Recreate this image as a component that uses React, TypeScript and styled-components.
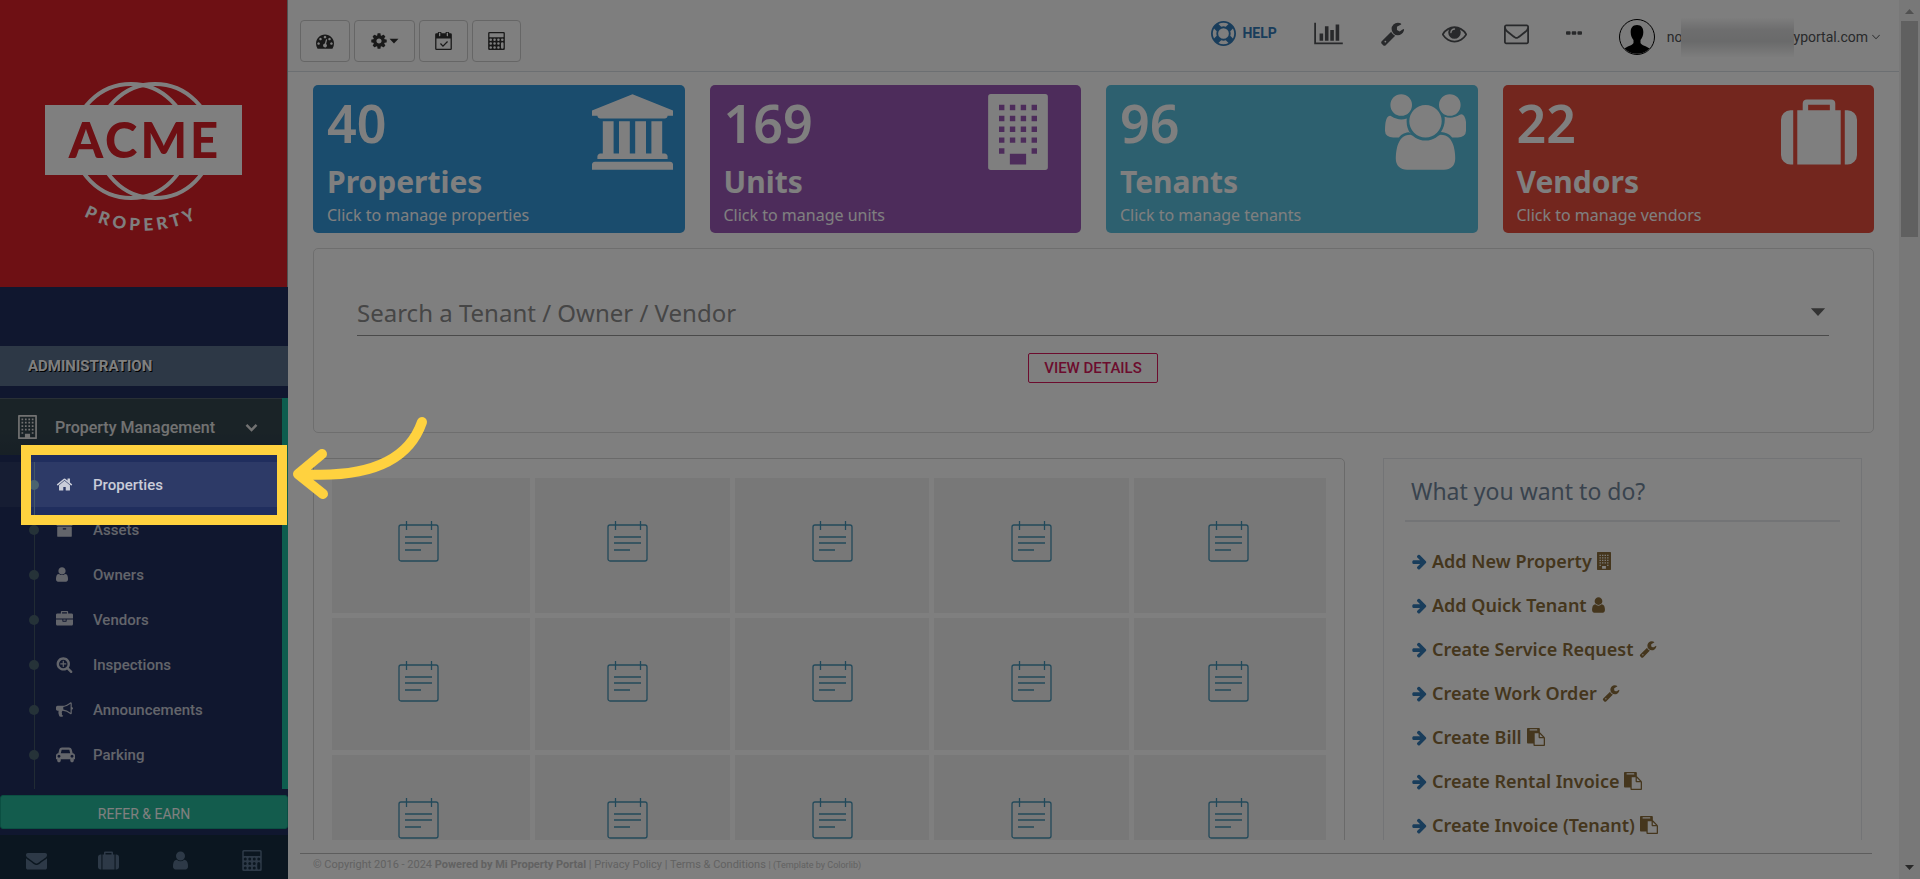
import React from "react";
import styled, { createGlobalStyle, css } from "styled-components";

const humanist = `"Noto Sans", "Open Sans", sans-serif`;
const roboto = `Roboto, "Liberation Sans", sans-serif`;

const GlobalStyle = createGlobalStyle`
  *, *::before, *::after { box-sizing: border-box; }
  body { margin: 0; background: #fff; font-family: ${roboto}; color: #333; }
  a { color: inherit; text-decoration: none; }
  ul { list-style: none; margin: 0; padding: 0; }
  h1, h2, p { margin: 0; }
  button, input { font: inherit; }
`;

/* ---------- icons ---------- */

type Glyph = { x?: number; w: number; d: string };

const dot = (x: number, y: number) =>
  `M${x - 128} ${y}a128 128 0 1 0 256 0a128 128 0 1 0-256 0z`;
const pane = (x: number, y: number) => `M${x} ${y}h128v128h-128z`;
const panes = [256, 512, 768, 1024]
  .flatMap((x) => [256, 512, 768, 1024].map((y) => pane(x, y)))
  .concat(pane(256, 1280), pane(1024, 1280))
  .join("");

const glyphs: Record<string, Glyph> = {
  envelope: { w: 1792, d: "M1792 710v794q0 66-47 113t-113 47h-1472q-66 0-113-47t-47-113v-794q44 49 101 87 362 246 497 345 57 42 92.5 65.5t94.5 48 110 24.5h2q51 0 110-24.5t94.5-48 92.5-65.5q170-123 498-345 57-39 100-87zm0-294q0 79-49 151t-122 123q-376 261-468 325-10 7-42.5 31t-54 38.5-52 32.5-57.5 27-50 9h-2q-23 0-50-9t-57.5-27-52-32.5-54-38.5-42.5-31q-91-64-262-182.5t-205-142.5q-62-42-117-115.5t-55-136.5q0-78 41.5-130t118.5-52h1472q65 0 112.5 47t47.5 113z" },
  home: { w: 1792, d: "M1472 992v480q0 26-19 45t-45 19h-384v-384h-256v384h-384q-26 0-45-19t-19-45v-480q0-1 .5-3t.5-3l575-474 575 474q1 2 1 6zm223-69l-62 74q-8 9-21 11h-3q-13 0-21-7l-692-577-692 577q-12 8-24 7-13-2-21-11l-62-74q-8-10-7-23.5t11-21.5l719-599q32-26 76-26t76 26l244 204v-195q0-14 9-23t23-9h192q14 0 23 9t9 23v408l219 182q10 8 11 21.5t-7 23.5z" },
  user: { x: 256, w: 1280, d: "M1536 1399q0 109-62.5 187t-150.5 78h-854q-88 0-150.5-78t-62.5-187q0-85 8.5-160.5t31.5-152 58.5-131 94-89 134.5-34.5q131 128 313 128t313-128q76 0 134.5 34.5t94 89 58.5 131 31.5 152 8.5 160.5zm-256-887q0 159-112.5 271.5t-271.5 112.5-271.5-112.5-112.5-271.5 112.5-271.5 271.5-112.5 271.5 112.5 112.5 271.5z" },
  wrench: { w: 1792, d: "M448 1472q0-26-19-45t-45-19-45 19-19 45 19 45 45 19 45-19 19-45zm644-420l-682 682q-37 37-90 37-52 0-91-37l-106-108q-38-36-38-90 0-53 38-91l681-681q39 98 114.5 173.5t173.5 114.5zm634-435q0 39-23 106-47 134-164.5 217.5t-258.5 83.5q-185 0-316.5-131.5t-131.5-316.5 131.5-316.5 316.5-131.5q58 0 121.5 16.5t107.5 46.5q16 11 16 28t-16 28l-293 169v224l193 107q5-3 79-48.5t135.5-81 70.5-35.5q15 0 23.5 10t8.5 25z" },
  chart: { w: 2048, d: "M640 896v512h-256v-512h256zm384-512v1024h-256v-1024h256zm1024 1152v128h-2048v-1536h128v1408h1920zm-640-896v768h-256v-768h256zm384-384v1152h-256v-1152h256z" },
  eye: { w: 1792, d: "M1664 960q-152-236-381-353 61 104 61 225 0 185-131.5 316.5t-316.5 131.5-316.5-131.5-131.5-316.5q0-121 61-225-229 117-381 353 133 205 333.5 326.5t434.5 121.5 434.5-121.5 333.5-326.5zm-720-384q0-20-14-34t-34-14q-125 0-214.5 89.5t-89.5 214.5q0 20 14 34t34 14 34-14 14-34q0-86 61-147t147-61q20 0 34-14t14-34zm848 384q0 34-20 69-140 230-376.5 368.5t-499.5 138.5-499.5-139-376.5-368q-20-35-20-69t20-69q140-229 376.5-368t499.5-139 499.5 139 376.5 368q20 35 20 69z" },
  envelopeOutline: { w: 1792, d: "M1664 1504v-768q-32 36-69 66-268 206-426 338-51 43-83 67t-86.5 48.5-102.5 24.5h-2q-48 0-102.5-24.5t-86.5-48.5-83-67q-158-132-426-338-37-30-69-66v768q0 13 9.5 22.5t22.5 9.5h1472q13 0 22.5-9.5t9.5-22.5zm0-1051v-24.5l-.5-13-3-12.5-5.5-9-9-7.5-14-2.500h-1472q-13 0-22.5 9.5t-9.5 22.5q0 168 147 284 193 152 401 317 6 5 35 29.5t46 37.5 44.5 31.5 50.5 27.5 43 9h2q20 0 43-9t50.5-27.5 44.5-31.5 46-37.5 35-29.5q208-165 401-317 54-43 100.5-115.5t46.5-131.5zm128-37v1088q0 66-47 113t-113 47h-1472q-66 0-113-47t-47-113v-1088q0-66 47-113t113-47h1472q66 0 113 47t47 113z" },
  bank: { w: 1920, d: "M960 0l960 384v128h-128q0 26-20.5 45t-48.5 19h-1526q-28 0-48.5-19t-20.5-45h-128v-128zm-704 640h256v768h128v-768h256v768h128v-768h256v768h128v-768h256v768h59q28 0 48.5 19t20.5 45v64h-1664v-64q0-26 20.5-45t48.5-19h59v-768zm1595 960q28 0 48.5 19t20.5 45v128h-1920v-128q0-26 20.5-45t48.5-19h1782z" },
  users: { w: 1920, d: "M593 896q-162 5-265 128h-134q-82 0-138-40.5t-56-118.5q0-353 124-353 6 0 43.5 21t97.5 42.5 119 21.5q67 0 133-23-5 37-5 66 0 159 90 295zm1071 637q0 120-73 189.5t-194 69.5h-874q-121 0-194-69.5t-73-189.5q0-53 3.5-103.5t14-109 26.5-108.5 43-97.5 62-81 85.5-53.5 111.5-20q10 0 43 21.5t73 48 107 48 135 21.5 135-21.5 107-48 73-48 43-21.5q61 0 111.5 20t85.5 53.5 62 81 43 97.5 26.5 108.5 14 109 3.5 103.5zm-1024-1277q0 106-75 181t-181 75-181-75-75-181 75-181 181-75 181 75 75 181zm704 384q0 159-112.5 271.5t-271.5 112.5-271.5-112.5-112.5-271.5 112.5-271.5 271.5-112.5 271.5 112.5 112.5 271.5zm576 225q0 78-56 118.5t-138 40.5h-134q-103-123-265-128 90-136 90-295 0-29-5-66 66 23 133 23 59 0 119-21.5t97.5-42.5 43.5-21q124 0 124 353zm-128-609q0 106-75 181t-181 75-181-75-75-181 75-181 181-75 181 75 75 181z" },
  suitcase: { w: 1792, d: "M640 384h512v-128h-512v128zm-352 0v1280h-64q-92 0-158-66t-66-158v-832q0-92 66-158t158-66h64zm1120 0v1280h-1024v-1280h128v-160q0-40 28-68t68-28h576q40 0 68 28t28 68v160h128zm384 224v832q0 92-66 158t-158 66h-64v-1280h64q92 0 158 66t66 158z" },
  briefcase: { w: 1792, d: "M640 256h512v-128h-512v128zm1152 640v480q0 66-47 113t-113 47h-1472q-66 0-113-47t-47-113v-480h672v160q0 26 19 45t45 19h320q26 0 45-19t19-45v-160h672zm-768 0v128h-256v-128h256zm768-480v384h-1792v-384q0-66 47-113t113-47h352v-160q0-40 28-68t68-28h576q40 0 68 28t28 68v160h352q66 0 113 47t47 113z" },
  arrow: { w: 1664, d: "M1600 960q0 54-37 91l-651 651q-39 37-91 37-51 0-90-37l-75-75q-38-38-38-91t38-91l293-293h-704q-52 0-84.5-37.5t-32.5-90.5v-128q0-53 32.5-90.5t84.5-37.5h704l-293-294q-38-36-38-90t38-90l75-75q38-38 90-38 53 0 91 38l651 651q37 35 37 90z" },
  paste: { w: 1792, d: "M768 1664h896v-640h-416q-40 0-68-28t-28-68v-416h-384v1152zm256-1440v-64q0-13-9.5-22.5t-22.5-9.5h-704q-13 0-22.5 9.5t-9.5 22.5v64q0 13 9.5 22.5t22.5 9.5h704q13 0 22.5-9.5t9.5-22.5zm256 672h299l-299-299v299zm512 128v672q0 40-28 68t-68 28h-960q-40 0-68-28t-28-68v-160h-544q-40 0-68-28t-28-68v-1344q0-40 28-68t68-28h1088q40 0 68 28t28 68v328q21 13 36 28l408 408q28 28 48 76t20 88z" },
  cog: { w: 1792, d: "M1152 896q0-106-75-181t-181-75-181 75-75 181 75 181 181 75 181-75 75-181zm512-109v222q0 12-8 23t-20 13l-185 28q-19 54-39 91 35 50 107 138 10 12 10 25t-9 23q-27 37-99 108t-94 71q-12 0-26-9l-138-108q-44 23-91 38-16 136-29 186-7 28-36 28h-222q-14 0-24.5-8.5t-11.5-21.5l-28-184q-49-16-90-37l-141 107q-10 9-25 9-14 0-25-11-126-114-165-168-7-10-7-23 0-12 8-23 15-21 51-66.5t54-70.5q-27-50-41-99l-183-27q-13-2-21-12.5t-8-23.5v-222q0-12 8-23t19-13l186-28q14-46 39-92-40-57-107-138-10-12-10-24 0-10 9-23 26-36 98.5-107.5t94.5-71.5q13 0 26 10l138 107q44-23 91-38 16-136 29-186 7-28 36-28h222q14 0 24.5 8.5t11.5 21.5l28 184q49 16 90 37l142-107q9-9 24-9 13 0 25 10 129 119 165 170 7 8 7 22 0 12-8 23-15 21-51 66.5t-54 70.5q26 50 41 98l183 28q13 2 21 12.5t8 23.5z" },
  lifeRing: { w: 1792, d: "M896 0q182 0 348 71t286 191 191 286 71 348-71 348-191 286-286 191-348 71-348-71-286-191-191-286-71-348 71-348 191-286 286-191 348-71zm0 128q-190 0-361 90l194 194q82-28 167-28t167 28l194-194q-171-90-361-90zm-678 1129l194-194q-28-82-28-167t28-167l-194-194q-90 171-90 361t90 361zm678 407q190 0 361-90l-194-194q-82 28-167 28t-167-28l-194 194q171 90 361 90zm0-384q159 0 271.5-112.5t112.5-271.5-112.5-271.5-271.5-112.5-271.5 112.5-112.5 271.5 112.5 271.5 271.5 112.5zm484-217l194 194q90-171 90-361t-90-361l-194 194q28 82 28 167t-28 167z" },
  searchPlus: { w: 1792, d: "M1088 800v64q0 13-9.5 22.5t-22.5 9.5h-224v224q0 13-9.5 22.5t-22.5 9.5h-64q-13 0-22.5-9.5t-9.5-22.5v-224h-224q-13 0-22.5-9.5t-9.5-22.5v-64q0-13 9.5-22.5t22.5-9.5h224v-224q0-13 9.5-22.5t22.5-9.5h64q13 0 22.5 9.5t9.5 22.5v224h224q13 0 22.5 9.5t9.5 22.5zm128 32q0-185-131.5-316.5t-316.5-131.5-316.5 131.5-131.5 316.5 131.5 316.5 316.5 131.5 316.5-131.5 131.5-316.5zm512 832q0 53-37.5 90.5t-90.5 37.5q-54 0-90-38l-343-342q-179 124-399 124-143 0-273.5-55.5t-225-150-150-225-55.5-273.5 55.5-273.5 150-225 225-150 273.5-55.5 273.5 55.5 225 150 150 225 55.5 273.5q0 220-124 399l343 343q37 37 37 90z" },
  archive: { w: 1792, d: "M1088 832q0-26-19-45t-45-19h-256q-26 0-45 19t-19 45 19 45 45 19h256q26 0 45-19t19-45zm576-192v960q0 26-19 45t-45 19h-1408q-26 0-45-19t-19-45v-960q0-26 19-45t45-19h1408q26 0 45 19t19 45zm64-448v256q0 26-19 45t-45 19h-1536q-26 0-45-19t-19-45v-256q0-26 19-45t45-19h1536q26 0 45 19t19 45z" },
  bullhorn: { w: 1792, d: "M1664 640q53 0 90.5 37.5t37.5 90.5-37.5 90.5-90.5 37.5v384q0 52-38 90t-90 38q-417-347-812-380-58 19-91 66t-31 100.5 40 92.5q-20 33-23 65.5t6 58 33.5 55 48 50 61.5 50.5q-29 58-111.5 83t-168.5 11.5-132-55.5q-7-23-29.5-87.5t-32-94.5-23-89-15-101 3.5-98.5 22-110.5h-122q-66 0-113-47t-47-113v-192q0-66 47-113t113-47h480q435 0 896-384 52 0 90 38t38 90v384zm-128 604v-954q-394 302-768 343v270q377 42 768 341z" },
  car: { w: 2048, d: "M480 1088q0-66-47-113t-113-47-113 47-47 113 47 113 113 47 113-47 47-113zm36-320h1016l-89-357q-2-8-14-17.5t-21-9.5h-768q-9 0-21 9.5t-14 17.5zm1372 320q0-66-47-113t-113-47-113 47-47 113 47 113 113 47 113-47 47-113zm160-96v384q0 14-9 23t-23 9h-96v128q0 80-56 136t-136 56-136-56-56-136v-128h-1024v128q0 80-56 136t-136 56-136-56-56-136v-128h-96q-14 0-23-9t-9-23v-384q0-93 65.5-158.5t158.5-65.5h28l105-419q23-94 104-157.5t179-63.5h768q98 0 179 63.5t104 157.5l105 419h28q93 0 158.5 65.5t65.5 158.5z" },
  gauge: { w: 1792, d: "M384 1152q0-53-37.5-90.5t-90.5-37.5-90.5 37.5-37.5 90.5 37.5 90.5 90.5 37.5 90.5-37.5 37.5-90.5zm192-448q0-53-37.5-90.5t-90.5-37.5-90.5 37.5-37.5 90.5 37.5 90.5 90.5 37.5 90.5-37.5 37.5-90.5zm428 481l101-382q6-26-7.5-48.5t-38.5-29.5-48 6.5-30 39.5l-101 382q-60 5-107 43.5t-63 98.5q-20 77 20 146t117 89 146-20 89-117q16-60-6-117t-72-91zm660-33q0-53-37.5-90.5t-90.5-37.5-90.5 37.5-37.5 90.5 37.5 90.5 90.5 37.5 90.5-37.5 37.5-90.5zm-640-640q0-53-37.5-90.5t-90.5-37.5-90.5 37.5-37.5 90.5 37.5 90.5 90.5 37.5 90.5-37.5 37.5-90.5zm448 192q0-53-37.5-90.5t-90.5-37.5-90.5 37.5-37.5 90.5 37.5 90.5 90.5 37.5 90.5-37.5 37.5-90.5zm320 448q0 261-141 483-19 29-54 29h-1402q-35 0-54-29-141-221-141-483 0-182 71-348t191-286 286-191 348-71 348 71 286 191 191 286 71 348z" },
  building: { w: 1408, d: `M64 0h1280q64 0 64 64v1664q0 64-64 64h-1280q-64 0-64-64v-1664q0-64 64-64z${panes}M512 1408h384v256h-384z` },
  buildingOutline: { w: 1408, d: `M64 0h1280q64 0 64 64v1664q0 64-64 64h-1280q-64 0-64-64v-1664q0-64 64-64zM128 128v1536h384v-256h384v256h384v-1536z${panes}` },
  calculator: { w: 1664, d: `M128 0h1408q128 0 128 128v1536q0 128-128 128h-1408q-128 0-128-128v-1536q0-128 128-128zM128 160v320q0 32 32 32h1344q32 0 32-32v-320q0-32-32-32h-1344q-32 0-32 32z${[256, 640, 1024].flatMap((x) => [768, 1152, 1536].map((y) => dot(x, y))).join("")}${dot(1408, 768)}M1280 1152v384q0 128 128 128t128-128v-384q0-128-128-128t-128 128z` },
  calendarCheck: { w: 1664, d: "M128 1664h1408v-1024h-1408zM384 96v288q0 32 32 32h64q32 0 32-32v-288q0-32-32-32h-64q-32 0-32 32zM1152 96v288q0 32 32 32h64q32 0 32-32v-288q0-32-32-32h-64q-32 0-32 32zM128 128h128v-32q0-96 96-96h192q96 0 96 96v32h384v-32q0-96 96-96h192q96 0 96 96v32h128q128 0 128 128v1408q0 128-128 128h-1408q-128 0-128-128v-1408q0-128 128-128zM1190 900l-410 410-206-206-90 90 296 296 500-500z" },
  chevron: { w: 1792, d: "M896 1480l-810-810 240-240 570 570 570-570 240 240z" },
  angle: { w: 1792, d: "M896 1300l-700-700 100-100 600 600 600-600 100 100z" },
  caret: { w: 1792, d: "M96 480h1600l-800 850z" },
  ellipsis: { w: 1792, d: "M96 704h320q96 0 96 96v192q0 96-96 96h-320q-96 0-96-96v-192q0-96 96-96zM736 704h320q96 0 96 96v192q0 96-96 96h-320q-96 0-96-96v-192q0-96 96-96zM1376 704h320q96 0 96 96v192q0 96-96 96h-320q-96 0-96-96v-192q0-96 96-96z" },
  circle: { w: 1792, d: "M0 896a896 896 0 1 0 1792 0a896 896 0 1 0-1792 0z" },
};

const Svg = styled.svg`
  display: block;
  flex: none;
  fill: currentColor;
`;

function Icon({ name, size }: { name: string; size: number }) {
  const g = glyphs[name];
  return (
    <Svg viewBox={`${g.x ?? 0} 0 ${g.w} 1792`} height={size} width={Math.round((size * g.w) / 1792)} aria-hidden="true">
      <path fillRule="evenodd" d={g.d} />
    </Svg>
  );
}

/* ---------- shell ---------- */

const Shell = styled.div`
  display: grid;
  grid-template-columns: 288px minmax(0, 1fr) 21px;
  height: 100vh;
  overflow: hidden;
`;

const Sidebar = styled.aside`
  display: flex;
  flex-direction: column;
  min-height: 0;
  background: #202e5e;
  color: #fff;
`;

const LogoBox = styled.div`
  flex: none;
  height: 287px;
  background: #dc2028;
  border-right: 1px solid #a0a0a0;
`;

const SectionTitle = styled.h2`
  flex: none;
  height: 40px;
  margin: 59px 0 12px;
  padding-left: 28px;
  background: #5a708c;
  font-size: 15px;
  line-height: 40px;
  font-weight: 700;
  text-shadow: 1px 1px #000;
`;

const MenuArea = styled.nav`
  flex: 1;
  min-height: 0;
  overflow: hidden;
  border-right: 6px solid #1abb9c;
`;

const MenuHead = styled.button`
  display: flex;
  align-items: center;
  width: 100%;
  height: 57px;
  padding: 0 24px 0 18px;
  border: 0;
  border-top: 1px solid #53606c;
  background: linear-gradient(#35474f, #34464f 60%, #2f404c);
  color: #e4e4e4;
  font-size: 16px;
  font-weight: 500;
  text-align: left;
`;

const MenuLabel = styled.span`
  flex: 1;
  padding-left: 18px;
`;

const SubMenu = styled.ul`
  padding-top: 7px;
`;

const SubLink = styled.a<{ $current?: boolean }>`
  display: grid;
  grid-template-columns: 10px 20px 1fr;
  column-gap: 17px;
  align-items: center;
  height: 45px;
  padding-left: 29px;
  color: rgba(255, 255, 255, 0.75);
  font-size: 15px;
  font-weight: 500;
  background: linear-gradient(#425668, #425668) 34px 0 / 1px 100% no-repeat;
  ${(p) =>
    p.$current &&
    css`
      background-color: rgba(255, 255, 255, 0.06);
    `}
`;

const Bullet = styled.span`
  width: 10px;
  height: 10px;
  border-radius: 50%;
  background: #4b6470;
`;

const ReferButton = styled.button`
  flex: none;
  height: 34px;
  margin: 6px 0;
  padding: 4px 0 0;
  border: 1px solid #169f85;
  border-radius: 3px;
  background: #26b99a;
  color: #fff;
  font-size: 14px;
`;

const QuickBar = styled.div`
  flex: none;
  display: grid;
  grid-template-columns: repeat(4, 1fr);
  height: 44px;
  background: #172d40;
  color: #5a738e;
`;

const QuickLink = styled.a`
  display: flex;
  align-items: center;
  justify-content: center;
  padding-top: 6px;
`;

/* ---------- main column ---------- */

const Main = styled.div`
  display: flex;
  flex-direction: column;
  min-height: 0;
`;

const TopBar = styled.header`
  flex: none;
  display: flex;
  justify-content: space-between;
  height: 72px;
  padding: 0 18px 0 12px;
  border-bottom: 1px solid #d9dee4;
  background: #fcfcfc;
`;

const ToolGroup = styled.div`
  display: flex;
  gap: 4px;
  padding-top: 20px;
`;

const ToolButton = styled.button`
  display: flex;
  align-items: center;
  justify-content: center;
  gap: 1px;
  height: 42px;
  padding: 0 15px;
  border: 1px solid #ccc;
  border-radius: 4px;
  background: #fff;
  color: #333;
`;

const StatusGroup = styled.div`
  display: flex;
  align-items: center;
  height: 66px;
  gap: 37px;
  color: #515356;
`;

const HelpLink = styled.a`
  display: flex;
  align-items: center;
  gap: 6px;
  color: #337ab7;
  font-size: 14px;
  font-weight: 700;
`;

const Profile = styled.button`
  display: flex;
  align-items: center;
  height: 100%;
  padding: 8px 0 0;
  border: 0;
  background: none;
  color: #515356;
  font-size: 14px;
`;

const Avatar = styled.svg`
  display: block;
  margin-right: 12px;
`;

const Redacted = styled.span`
  width: 113px;
  height: 39px;
  margin-left: -2px;
  background: linear-gradient(rgba(250, 250, 250, 0.6), #dcdcdd 30%, #d4d5d6 60%, #fafafa);
`;

const CaretSlot = styled.span`
  margin-left: 3px;
`;

const Scroller = styled.main`
  flex: 1;
  min-height: 0;
  overflow: hidden;
  padding: 13px 25px 0;
`;

const Cards = styled.div`
  display: grid;
  grid-template-columns: repeat(4, 1fr);
  gap: 25px;
`;

const Card = styled.a<{ $bg: string }>`
  display: grid;
  grid-template-columns: 1fr 93px;
  height: 148px;
  padding: 0 0 0 14px;
  border-radius: 5px;
  background: ${(p) => p.$bg};
  color: #fff;
  font-family: ${humanist};
`;

const CardText = styled.div`
  display: flex;
  flex-direction: column;
`;

const CardNumber = styled.span`
  padding-top: 10px;
  font-size: 52px;
  line-height: 56px;
  font-weight: 600;
`;

const CardTitle = styled.span`
  padding-top: 11px;
  font-size: 30px;
  line-height: 40px;
  font-weight: 700;
`;

const CardHint = styled.span`
  font-size: 16px;
  line-height: 26px;
`;

const CardIcon = styled.div`
  padding-top: 9px;
`;

const SearchPanel = styled.section`
  display: flex;
  flex-direction: column;
  align-items: center;
  height: 185px;
  margin-top: 15px;
  padding: 40px 44px 0 43px;
  border: 1px solid #ddd;
  border-radius: 5px;
`;

const SearchRow = styled.label`
  display: flex;
  align-items: center;
  justify-content: space-between;
  width: 100%;
  height: 47px;
  padding-right: 3px;
  border-bottom: 1px solid #949494;
  color: #666;
`;

const SearchInput = styled.input`
  flex: 1;
  min-width: 0;
  padding: 0;
  border: 0;
  outline: 0;
  background: none;
  color: #333;
  font-family: ${humanist};
  font-size: 24px;
  &::placeholder {
    color: #8c8c8c;
    opacity: 1;
  }
`;

const ViewButton = styled.button`
  height: 30px;
  margin-top: 17px;
  padding: 0 15px;
  border: 1px solid #d9185c;
  border-radius: 2px;
  background: #fff;
  color: #d9185c;
  font-size: 15px;
  font-weight: 500;
`;

const Columns = styled.div`
  display: grid;
  grid-template-columns: minmax(0, 1032px) minmax(0, 479px);
  justify-content: space-between;
  align-items: start;
  margin-top: 25px;
  padding-right: 12px;
`;

const BoardPanel = styled.section`
  height: 520px;
  padding: 19px 18px 0;
  border: 1px solid #d5d5d5;
  border-radius: 5px;
`;

const Board = styled.div`
  display: grid;
  grid-template-columns: 198fr 195fr 195fr 195fr 192fr;
  grid-template-rows: 135px 132px 132px;
  gap: 5px;
`;

const Tile = styled.div<{ $inset: number }>`
  padding: 42px 0 0 ${(p) => p.$inset}px;
  background: #f1f1f1;
`;

const TodoPanel = styled.section`
  padding: 0 21px;
  height: 520px;
  border: 1px solid #e6e9ed;
  font-family: ${humanist};
`;

const TodoTitle = styled.h2`
  height: 63px;
  padding-left: 6px;
  border-bottom: 2px solid #e6e9ed;
  color: #73879c;
  font-size: 23px;
  line-height: 64px;
  font-weight: 400;
`;

const TodoList = styled.ul`
  padding: 17px 6px 0;
`;

const TodoLink = styled.a`
  display: flex;
  align-items: center;
  gap: 5px;
  height: 44px;
  color: #8a6d3b;
  font-size: 18px;
  font-weight: 600;
`;

const Blue = styled.span`
  color: #337ab7;
`;

const Footer = styled.footer`
  flex: none;
  height: 26px;
  margin: 13px 27px 0 12px;
  padding-left: 13px;
  border-top: 1px solid #bbb;
  color: #c4c4c4;
  font-size: 11px;
  line-height: 22px;
`;

const Small = styled.small`
  font-size: 9px;
`;

const ScrollTrack = styled.div`
  display: flex;
  flex-direction: column;
  align-items: center;
  justify-content: space-between;
  padding: 6px 2px 7px;
  background: #f1f1f1;
`;

const ScrollThumb = styled.div`
  width: 17px;
  height: 216px;
  margin-top: 3px;
  background: #c1c1c1;
`;

/* ---------- guided-tour layer ---------- */

const Spotlight = styled.div`
  position: fixed;
  left: 21px;
  top: 445px;
  width: 266px;
  height: 80px;
  border: 10px solid #ffd23f;
  box-shadow: 0 0 0 9999px rgba(0, 0, 0, 0.5);
  pointer-events: none;
`;

const Pointer = styled.svg`
  position: fixed;
  left: 288px;
  top: 412px;
  pointer-events: none;
`;

/* ---------- data ---------- */

const menu = [
  { label: "Properties", icon: "home" },
  { label: "Assets", icon: "archive" },
  { label: "Owners", icon: "user" },
  { label: "Vendors", icon: "briefcase" },
  { label: "Inspections", icon: "searchPlus" },
  { label: "Announcements", icon: "bullhorn" },
  { label: "Parking", icon: "car" },
];

const cards = [
  { n: 40, title: "Properties", hint: "Click to manage properties", bg: "#3498db", icon: "bank" },
  { n: 169, title: "Units", hint: "Click to manage units", bg: "#9b59b6", icon: "building" },
  { n: 96, title: "Tenants", hint: "Click to manage tenants", bg: "#5bc0de", icon: "users" },
  { n: 22, title: "Vendors", hint: "Click to manage vendors", bg: "#e74c3c", icon: "suitcase" },
];

const todos = [
  { label: "Add New Property", icon: "building" },
  { label: "Add Quick Tenant", icon: "user" },
  { label: "Create Service Request", icon: "wrench" },
  { label: "Create Work Order", icon: "wrench" },
  { label: "Create Bill", icon: "paste" },
  { label: "Create Rental Invoice", icon: "paste" },
  { label: "Create Invoice (Tenant)", icon: "paste" },
];

const columnInsets = [66, 72, 77, 77, 74];

function Logo() {
  return (
    <svg width="286" height="287" viewBox="0 0 286 287" role="img" aria-label="Acme Property">
      <g fill="none" stroke="#fff" strokeWidth="4">
        <circle cx="131" cy="141" r="57" />
        <circle cx="155" cy="141" r="57" />
      </g>
      <rect x="45" y="105" width="197" height="70" fill="#fff" />
      <text x="145" y="158" textAnchor="middle" fill="#dc2028" fontFamily="Lato, sans-serif" fontWeight="900" fontSize="49" letterSpacing="3">
        ACME
      </text>
      <path id="arc" d="M84 216A127 127 0 0 0 206 214" fill="none" />
      <text fill="#fff" fontFamily="Lato, sans-serif" fontWeight="900" fontSize="17" letterSpacing="4">
        <textPath href="#arc">PROPERTY</textPath>
      </text>
    </svg>
  );
}

function NoteIcon() {
  return (
    <svg width="41" height="42" viewBox="0 0 41 42" fill="none" stroke="#4593b4" strokeWidth="1.300" aria-hidden="true">
      <rect x="1" y="5" width="39" height="36" rx="2" />
      <path d="M8.500 1v9M33.500 1v9M7 17h27M7 23h27M7 30h16" />
    </svg>
  );
}

export default function App() {
  return (
    <>
      <GlobalStyle />
      <Shell>
        <Sidebar>
          <LogoBox>
            <Logo />
          </LogoBox>
          <SectionTitle>ADMINISTRATION</SectionTitle>
          <MenuArea>
            <MenuHead>
              <Icon name="buildingOutline" size={24} />
              <MenuLabel>Property Management</MenuLabel>
              <Icon name="chevron" size={13} />
            </MenuHead>
            <SubMenu>
              {menu.map((m, i) => (
                <li key={m.label}>
                  <SubLink href="#" $current={i === 0}>
                    <Bullet />
                    <Icon name={m.icon} size={17} />
                    <span>{m.label}</span>
                  </SubLink>
                </li>
              ))}
              <li>
                <SubLink href="#" aria-label="More">
                  <Bullet />
                  <Icon name="circle" size={22} />
                </SubLink>
              </li>
            </SubMenu>
          </MenuArea>
          <ReferButton>REFER &amp; EARN</ReferButton>
          <QuickBar>
            {["envelope", "suitcase", "user", "calculator"].map((n) => (
              <QuickLink key={n} href="#" aria-label={n}>
                <Icon name={n} size={21} />
              </QuickLink>
            ))}
          </QuickBar>
        </Sidebar>

        <Main>
          <TopBar>
            <ToolGroup>
              <ToolButton aria-label="Dashboard"><Icon name="gauge" size={18} /></ToolButton>
              <ToolButton aria-label="Settings">
                <Icon name="cog" size={18} />
                <Icon name="caret" size={10} />
              </ToolButton>
              <ToolButton aria-label="Calendar"><Icon name="calendarCheck" size={18} /></ToolButton>
              <ToolButton aria-label="Calculator"><Icon name="calculator" size={18} /></ToolButton>
            </ToolGroup>
            <StatusGroup>
              <HelpLink href="#"><Icon name="lifeRing" size={25} />HELP</HelpLink>
              <a href="#" aria-label="Reports"><Icon name="chart" size={25} /></a>
              <a href="#" aria-label="Maintenance"><Icon name="wrench" size={25} /></a>
              <a href="#" aria-label="Watch list"><Icon name="eye" size={25} /></a>
              <a href="#" aria-label="Messages"><Icon name="envelopeOutline" size={25} /></a>
              <a href="#" aria-label="More"><Icon name="ellipsis" size={16} /></a>
              <Profile>
                <Avatar width="36" height="36" viewBox="0 0 36 36" aria-hidden="true">
                  <circle cx="18" cy="18" r="17.500" fill="#f6f6f6" stroke="#000" />
                  <path d="M18 6c4.500 0 6.500 3 6.300 7.500 0 3-1.300 5.500-2.800 7.500v3c1 2.500 6 3 9 5.500A17.500 17.500 0 0 1 5.500 29.500c3-2.500 8-3 9-5.500v-3c-1.500-2-2.800-4.500-2.800-7.500C11.500 9 13.500 6 18 6z" />
                </Avatar>
                no<Redacted />yportal.com
                <CaretSlot><Icon name="angle" size={10} /></CaretSlot>
              </Profile>
            </StatusGroup>
          </TopBar>

          <Scroller>
            <Cards>
              {cards.map((c) => (
                <Card key={c.title} href="#" $bg={c.bg}>
                  <CardText>
                    <CardNumber>{c.n}</CardNumber>
                    <CardTitle>{c.title}</CardTitle>
                    <CardHint>{c.hint}</CardHint>
                  </CardText>
                  <CardIcon><Icon name={c.icon} size={76} /></CardIcon>
                </Card>
              ))}
            </Cards>

            <SearchPanel>
              <SearchRow>
                <SearchInput placeholder="Search a Tenant / Owner / Vendor" aria-label="Search a Tenant / Owner / Vendor" />
                <Icon name="caret" size={16} />
              </SearchRow>
              <ViewButton>VIEW DETAILS</ViewButton>
            </SearchPanel>

            <Columns>
              <BoardPanel>
                <Board>
                  {[0, 1, 2].flatMap((r) =>
                    columnInsets.map((inset, c) => (
                      <Tile key={`${r}-${c}`} $inset={inset}><NoteIcon /></Tile>
                    ))
                  )}
                </Board>
              </BoardPanel>
              <TodoPanel>
                <TodoTitle>What you want to do?</TodoTitle>
                <TodoList>
                  {todos.map((t) => (
                    <li key={t.label}>
                      <TodoLink href="#">
                        <Blue><Icon name="arrow" size={17} /></Blue>
                        {t.label}
                        <Icon name={t.icon} size={18} />
                      </TodoLink>
                    </li>
                  ))}
                </TodoList>
              </TodoPanel>
            </Columns>
          </Scroller>

          <Footer>
            © Copyright 2016 - 2024 <b>Powered by Mi Property Portal</b> | <a href="#">Privacy Policy</a> |{" "}
            <a href="#">Terms &amp; Conditions</a> <Small>| (Template by Colorlib)</Small>
          </Footer>
        </Main>

        <ScrollTrack>
          <div>
            <Svg width="17" height="12" viewBox="0 0 17 12" aria-hidden="true"><path d="M4 8l4.500-5 4.500 5z" fill="#a3a3a3" /></Svg>
            <ScrollThumb />
          </div>
          <Svg width="17" height="10" viewBox="0 0 17 10" aria-hidden="true"><path d="M4 3l4.500 5 4.500-5z" fill="#505050" /></Svg>
        </ScrollTrack>
      </Shell>

      <Spotlight />
      <Pointer width="150" height="100" viewBox="0 0 150 100" fill="none" stroke="#ffd23f" strokeWidth="10" strokeLinecap="round" strokeLinejoin="round" aria-hidden="true">
        <path d="M134 10C125 36 100 68 12 62M34 42L10 62L35 82" />
      </Pointer>
    </>
  );
}
